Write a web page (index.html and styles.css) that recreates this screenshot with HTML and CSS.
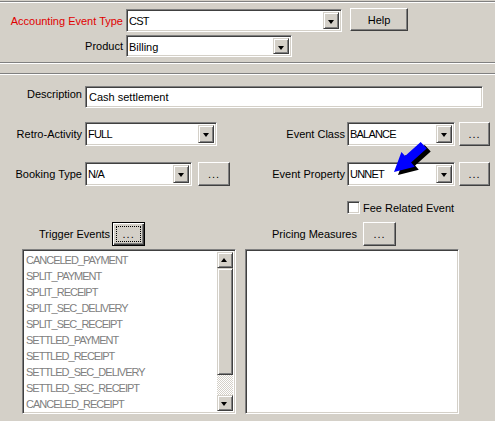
FILE: index.html
```html
<!DOCTYPE html>
<html lang="en">
<head>
  <meta charset="UTF-8">
  <title>Accounting Event</title>
  <link rel="stylesheet" href="styles.css">
</head>
<body>
  <div class="header">
    <div class="row row-type">
      <label class="lbl lbl-top required">Accounting Event Type</label>
      <div class="combo combo-type"><span class="value caps">CST</span><span class="drop"></span></div>
      <button class="btn btn-help">Help</button>
    </div>
    <div class="row row-product">
      <label class="lbl lbl-top">Product</label>
      <div class="combo combo-product"><span class="value">Billing</span><span class="drop"></span></div>
    </div>
  </div>

  <div class="sep sep-first"></div>
  <div class="sep sep-second"></div>

  <div class="main">
    <div class="row row-desc">
      <label class="lbl lbl-left lbl-high">Description</label>
      <div class="field field-desc">Cash settlement</div>
    </div>

    <div class="row row-retro">
      <label class="lbl lbl-left">Retro-Activity</label>
      <div class="combo combo-retro"><span class="value caps">FULL</span><span class="drop"></span></div>
      <label class="lbl lbl-right">Event Class</label>
      <div class="combo combo-right"><span class="value caps">BALANCE</span><span class="drop"></span></div>
      <button class="btn btn-more">...</button>
    </div>

    <div class="row row-booking">
      <label class="lbl lbl-left">Booking Type</label>
      <div class="combo combo-booking"><span class="value caps">N/A</span><span class="drop"></span></div>
      <button class="btn btn-more btn-booking">...</button>
      <label class="lbl lbl-right">Event Property</label>
      <div class="combo combo-right"><span class="value caps">UNNET</span><span class="drop"></span></div>
      <button class="btn btn-more">...</button>
    </div>

    <div class="row row-fee">
      <span class="checkbox"></span>
      <span class="fee-text">Fee Related Event</span>
    </div>

    <div class="panes">
      <div class="pane">
        <div class="pane-head head-trigger">
          <span>Trigger Events</span>
          <button class="btn btn-more btn-default"><span class="focus">...</span></button>
        </div>
        <div class="listbox">
          <ul class="items">
            <li>CANCELED_PAYMENT</li>
            <li>SPLIT_PAYMENT</li>
            <li>SPLIT_RECEIPT</li>
            <li>SPLIT_SEC_DELIVERY</li>
            <li>SPLIT_SEC_RECEIPT</li>
            <li>SETTLED_PAYMENT</li>
            <li>SETTLED_RECEIPT</li>
            <li>SETTLED_SEC_DELIVERY</li>
            <li>SETTLED_SEC_RECEIPT</li>
            <li>CANCELED_RECEIPT</li>
          </ul>
          <div class="scrollbar">
            <span class="sb-btn sb-up"></span>
            <span class="sb-thumb"></span>
            <span class="sb-track"></span>
            <span class="sb-btn sb-down"></span>
          </div>
        </div>
      </div>
      <div class="pane">
        <div class="pane-head head-pricing">
          <span>Pricing Measures</span>
          <button class="btn btn-more btn-pricing">...</button>
        </div>
        <div class="listbox"></div>
      </div>
    </div>
  </div>

  <!-- annotation arrow drawn over the form -->
  <svg class="pointer" width="495" height="421" viewBox="0 0 495 421">
    <g transform="translate(4 3)">
      <polygon fill="#000" points="394,172 401.4,151.9 405.1,156 420.7,141.9 426.7,148.5 411.1,162.6 414.8,166.7"/>
    </g>
    <polygon fill="#0000ff" points="394,172 401.4,151.9 405.1,156 420.7,141.9 426.7,148.5 411.1,162.6 414.8,166.7"/>
  </svg>
</body>
</html>
```

FILE: styles.css
```css
body {
  margin: 0;
  width: 495px;
  height: 421px;
  overflow: hidden;
  position: relative;
  background: #d4d0c8;
  font-family: "Liberation Sans", Arial, sans-serif;
  font-size: 11px;
  color: #000;
}
.header {
  margin-top: 1px;
  border-top: 1px solid #808080;
  box-shadow: inset 0 1px #fff;
  padding-top: 7px;
}
.row {
  display: flex;
  align-items: center;
}
.lbl {
  box-sizing: border-box;
  white-space: nowrap;
}
.lbl-top {
  width: 126px;
  padding-right: 3px;
  text-align: right;
}
.required {
  color: #e00000;
}
.lbl-left {
  width: 85px;
  padding-right: 3px;
  text-align: right;
}
.lbl-right {
  flex: 1;
  padding-right: 2px;
  text-align: right;
}
.lbl-high {
  align-self: flex-start;
  line-height: 17px;
}

/* sunken fields */
.combo, .field, .listbox {
  box-sizing: border-box;
  background: #fff;
  border: 1px solid;
  border-color: #808080 #fff #fff #808080;
  box-shadow: inset 1px 1px #404040, inset -1px -1px #d4d0c8;
}
.combo {
  display: flex;
  align-items: stretch;
  padding: 2px;
  height: 24px;
}
.value {
  flex: 1;
  padding-left: 0;
  line-height: 18px;
  white-space: nowrap;
}
.caps {
  letter-spacing: -0.8px;
}
.drop {
  position: relative;
  width: 16px;
  box-sizing: border-box;
  background: #d4d0c8;
  border: 1px solid;
  border-color: #d4d0c8 #404040 #404040 #d4d0c8;
  box-shadow: inset 1px 1px #fff, inset -1px -1px #808080;
}
.drop::after {
  content: "";
  position: absolute;
  left: 4px;
  top: 7px;
  border-left: 3.5px solid transparent;
  border-right: 3.5px solid transparent;
  border-top: 4px solid #000;
}

.combo-type {
  width: 216px;
  height: 23px;
}
.combo-product {
  width: 166px;
  height: 22px;
}
.row-product {
  margin-top: 3px;
}
.combo-retro {
  width: 132px;
}
.combo-booking {
  width: 107px;
}
.combo-right {
  width: 108px;
}

/* raised buttons */
.btn {
  box-sizing: border-box;
  font-family: inherit;
  font-size: 11px;
  color: #000;
  background: #d4d0c8;
  border: 1px solid;
  border-color: #fff #404040 #404040 #fff;
  box-shadow: inset -1px -1px #808080;
  padding: 0;
  height: 24px;
}
.btn-help {
  width: 58px;
  height: 23px;
  margin-left: 8px;
  align-self: flex-start;
  margin-top: -1px;
}
.btn-more {
  width: 31px;
  margin-left: 4px;
  margin-right: 5px;
  letter-spacing: 1px;
}
.btn-booking {
  width: 32px;
  margin-left: 6px;
  margin-right: 0;
}
.btn-default {
  width: 33px;
  margin: 0 0 0 2px;
  border: 1px solid #000;
  box-shadow: inset 1px 1px #fff, inset -1px -1px #404040, inset -2px -2px #808080;
  padding: 3px;
}
.focus {
  display: block;
  height: 100%;
  box-sizing: border-box;
  border: 1px dotted #000;
  line-height: 14px;
}
.btn-pricing {
  width: 33px;
  margin: 0 0 0 6px;
}

.sep {
  border-top: 1px solid #808080;
  border-bottom: 1px solid #fff;
}
.sep-first {
  margin-top: 5px;
}
.sep-second {
  margin-top: 9px;
}

.main {
  padding-top: 11px;
}
.field {
  height: 22px;
  padding: 2px 3px;
  line-height: 17px;
}
.field-desc {
  width: 398px;
}
.row-retro {
  margin-top: 14px;
}
.row-booking {
  margin-top: 16px;
}
.row-fee {
  margin-top: 15px;
  padding-left: 347px;
}
.checkbox {
  width: 13px;
  height: 13px;
  box-sizing: border-box;
  background: #fff;
  border: 1px solid;
  border-color: #808080 #fff #fff #808080;
  box-shadow: inset 1px 1px #404040, inset -1px -1px #d4d0c8;
}
.fee-text {
  margin-left: 3px;
}

.panes {
  display: flex;
  gap: 9px;
  margin-top: 8px;
  padding-left: 22px;
}
.pane {
  width: 214px;
}
.pane-head {
  display: flex;
  align-items: center;
  height: 24px;
}
.head-trigger {
  padding-left: 17px;
}
.head-pricing {
  padding-left: 27px;
}
.listbox {
  display: flex;
  margin-top: 3px;
  height: 165px;
  padding: 2px;
}
.items {
  flex: 1;
  list-style: none;
  margin: 0;
  padding: 0 0 0 1px;
  color: #808080;
  line-height: 16px;
  letter-spacing: -1px;
  overflow: hidden;
}
.scrollbar {
  width: 16px;
  display: flex;
  flex-direction: column;
}
.sb-btn, .sb-thumb {
  box-sizing: border-box;
  background: #d4d0c8;
  border: 1px solid;
  border-color: #d4d0c8 #404040 #404040 #d4d0c8;
  box-shadow: inset 1px 1px #fff, inset -1px -1px #808080;
}
.sb-btn {
  position: relative;
  height: 16px;
}
.sb-btn::after {
  content: "";
  position: absolute;
  left: 3px;
  border-left: 3.5px solid transparent;
  border-right: 3.5px solid transparent;
}
.sb-up::after {
  top: 5px;
  border-bottom: 4px solid #000;
}
.sb-down::after {
  top: 6px;
  border-top: 4px solid #000;
}
.sb-thumb {
  height: 107px;
}
.sb-track {
  flex: 1;
  background: repeating-conic-gradient(#fff 0 25%, #d4d0c8 0 50%) 0 0 / 2px 2px;
}

.pointer {
  position: absolute;
  left: 0;
  top: 0;
  pointer-events: none;
}
```
